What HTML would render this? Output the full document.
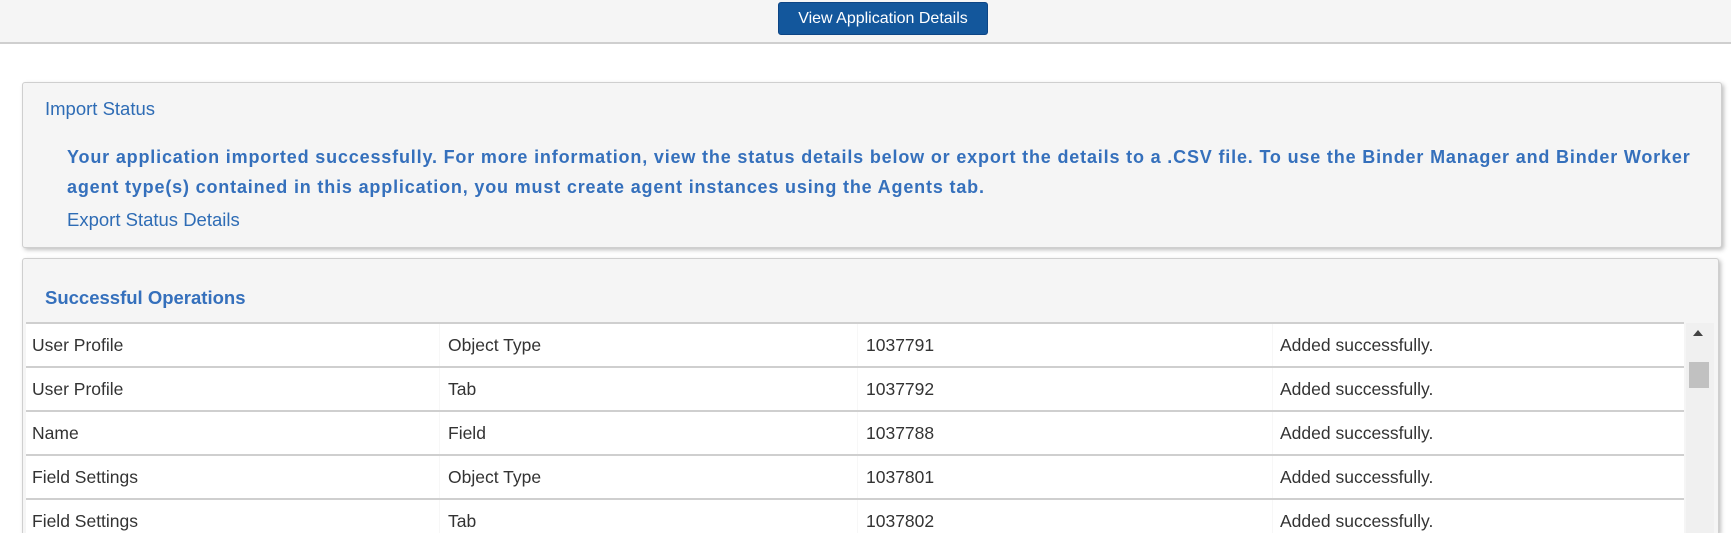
<!DOCTYPE html>
<html style="width:1731px;height:533px;overflow:hidden"><head><meta charset="utf-8"><style>
*{margin:0;padding:0;box-sizing:border-box}
body{width:1731px;height:533px;overflow:hidden;background:#fff;font-family:"Liberation Sans",sans-serif;position:relative}
.hdr{position:absolute;left:0;top:0;width:1731px;height:44px;background:#f5f5f5;border-bottom:2px solid #cfcfcf}
.btn{position:absolute;left:778px;top:2px;width:210px;height:33px;background:#13579c;border:1px solid #0d4585;border-radius:3px;color:#fff;font-size:16px;line-height:31px;text-align:center}
.box{position:absolute;background:#f5f5f5;border:1px solid #cfcfcf;border-radius:3px;box-shadow:2px 2px 4px rgba(0,0,0,.25)}
.t{position:absolute;color:#2e6cb5;white-space:nowrap}
.row{position:absolute;left:26px;width:1658px;height:44px;background:#fff;border-top:2px solid #cfcfcf}
.row span{position:absolute;top:11px;font-size:17.5px;color:#333;white-space:nowrap}
.row i{position:absolute;top:0;bottom:0;width:1px;background:#f7f7f7}
</style></head><body>
<div class="hdr"><div class="btn">View Application Details</div></div>
<div class="box" style="left:22px;top:82px;width:1700px;height:166px"></div>
<div class="t" style="left:45px;top:98px;font-size:18.5px">Import Status</div>
<div class="t" style="left:67px;top:147px;font-size:18px;font-weight:bold;letter-spacing:0.83px;color:#3570bc">Your application imported successfully. For more information, view the status details below or export the details to a .CSV file. To use the Binder Manager and Binder Worker</div>
<div class="t" style="left:67px;top:177px;font-size:18px;font-weight:bold;letter-spacing:0.83px;color:#3570bc">agent type(s) contained in this application, you must create agent instances using the Agents tab.</div>
<div class="t" style="left:67px;top:209px;font-size:18.5px">Export Status Details</div>
<div class="box" style="left:22px;top:258px;width:1697px;height:275px;border-bottom:none;border-radius:3px 3px 0 0"></div>
<div class="t" style="left:45px;top:287px;font-size:18.5px;font-weight:bold;color:#3570bc">Successful Operations</div>
<div style="position:absolute;left:1686px;top:323px;width:28px;height:210px;background:#f0f0f0"></div>
<div style="position:absolute;left:1693px;top:330px;width:0;height:0;border-left:5px solid transparent;border-right:5px solid transparent;border-bottom:6px solid #444"></div>
<div style="position:absolute;left:1689px;top:362px;width:20px;height:26px;background:#c1c1c1"></div>
<div style="position:absolute;left:26px;top:323px;width:1658px;height:210px;background:#fff"></div>
<div class="row" style="top:322px"><i style="left:413px"></i><i style="left:831px"></i><i style="left:1246px"></i><span style="left:6px">User Profile</span><span style="left:422px">Object Type</span><span style="left:840px">1037791</span><span style="left:1254px">Added successfully.</span></div>
<div class="row" style="top:366px"><i style="left:413px"></i><i style="left:831px"></i><i style="left:1246px"></i><span style="left:6px">User Profile</span><span style="left:422px">Tab</span><span style="left:840px">1037792</span><span style="left:1254px">Added successfully.</span></div>
<div class="row" style="top:410px"><i style="left:413px"></i><i style="left:831px"></i><i style="left:1246px"></i><span style="left:6px">Name</span><span style="left:422px">Field</span><span style="left:840px">1037788</span><span style="left:1254px">Added successfully.</span></div>
<div class="row" style="top:454px"><i style="left:413px"></i><i style="left:831px"></i><i style="left:1246px"></i><span style="left:6px">Field Settings</span><span style="left:422px">Object Type</span><span style="left:840px">1037801</span><span style="left:1254px">Added successfully.</span></div>
<div class="row" style="top:498px;height:35px"><i style="left:413px"></i><i style="left:831px"></i><i style="left:1246px"></i><span style="left:6px">Field Settings</span><span style="left:422px">Tab</span><span style="left:840px">1037802</span><span style="left:1254px">Added successfully.</span></div>
</body></html>
